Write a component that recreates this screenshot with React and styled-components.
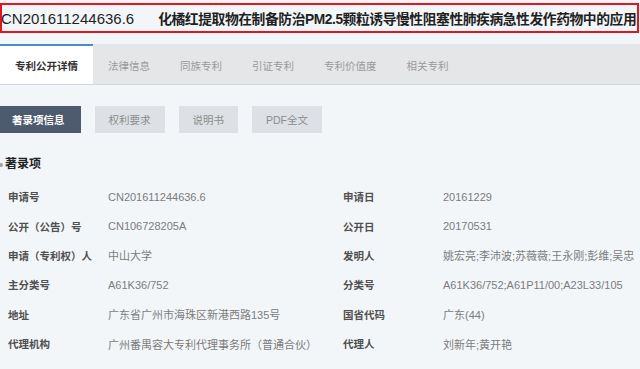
import React from "react";
import styled, { createGlobalStyle, css } from "styled-components";

const Global = createGlobalStyle`
  html, body { margin: 0; padding: 0; background: #f3f6f9; }
  body { font-family: "Liberation Sans", "Noto Sans CJK SC", sans-serif; overflow: hidden; }
`;

const Page = styled.div`
  width: 640px;
  height: 369px;
  padding-top: 3px;
  box-sizing: border-box;
`;

const TitleBox = styled.div`
  height: 30px;
  width: 639px;
  box-sizing: border-box;
  border: 2px solid #e3151d;
  display: flex;
  align-items: center;
  overflow: hidden;
  white-space: nowrap;
  color: #1f1f1f;
`;

const PatentNo = styled.span`
  font-size: 15px;
  margin-left: -1px;
`;

const PatentTitle = styled.span`
  font-size: 13.8px;
  font-weight: bold;
  margin-left: 24px;
  letter-spacing: -0.45px;
`;

const TabBar = styled.div`
  margin-top: 11px;
  height: 40px;
  background: #e4e6e7;
  border-bottom: 1px solid #cfd8e2;
  display: flex;
`;

const Tab = styled.div`
  padding: 0 15px;
  display: flex;
  align-items: center;
  font-size: 10.5px;
  color: #9a9a9a;
  box-sizing: border-box;
  border-top: 2px solid transparent;
  ${(p) =>
    p.$active &&
    css`
      background: #ffffff;
      color: #333;
      font-weight: bold;
      border-top-color: #4a8cc4;
    `}
`;

const ButtonRow = styled.div`
  margin-top: 21px;
  display: flex;
  gap: 14px;
`;

const Btn = styled.div`
  height: 27px;
  padding: 0 14px;
  display: flex;
  align-items: center;
  font-size: 10.5px;
  color: ${(p) => (p.$active ? "#ffffff" : "#8c8c8c")};
  background: ${(p) => (p.$active ? "#4e5a6d" : "#dde1e5")};
  font-weight: ${(p) => (p.$active ? "bold" : "normal")};
  &:first-child { padding-left: 12px; padding-right: 16px; }
`;

const Heading = styled.div`
  margin-top: 24px;
  padding-left: 5px;
  position: relative;
  font-size: 12px;
  line-height: 14px;
  font-weight: bold;
  color: #222;
  &::before {
    content: "";
    position: absolute;
    left: -1px;
    top: 6px;
    width: 4px;
    height: 4px;
    border-radius: 50%;
    background: #9aa3ad;
  }
`;

const Grid = styled.div`
  margin-top: 11px;
  padding-left: 8px;
  display: grid;
  grid-template-columns: 100px 235px 100px 1fr;
  grid-auto-rows: 29.4px;
  align-items: center;
  white-space: nowrap;
`;

const Label = styled.div`
  font-size: 10.5px;
  font-weight: bold;
  color: #505050;
`;

const Value = styled.div`
  font-size: 11px;
  color: #7c7c7c;
`;

const tabs = ["专利公开详情", "法律信息", "同族专利", "引证专利", "专利价值度", "相关专利"];
const buttons = ["著录项信息", "权利要求", "说明书", "PDF全文"];
const rows = [
  ["申请号", "CN201611244636.6", "申请日", "20161229"],
  ["公开（公告）号", "CN106728205A", "公开日", "20170531"],
  ["申请（专利权）人", "中山大学", "发明人", "姚宏亮;李沛波;苏薇薇;王永刚;彭维;吴忠"],
  ["主分类号", "A61K36/752", "分类号", "A61K36/752;A61P11/00;A23L33/105"],
  ["地址", "广东省广州市海珠区新港西路135号", "国省代码", "广东(44)"],
  ["代理机构", "广州番禺容大专利代理事务所（普通合伙）", "代理人", "刘新年;黄开艳"],
];

export default function App() {
  return (
    <Page>
      <Global />
      <TitleBox>
        <PatentNo>CN201611244636.6</PatentNo>
        <PatentTitle>化橘红提取物在制备防治PM2.5颗粒诱导慢性阻塞性肺疾病急性发作药物中的应用</PatentTitle>
      </TitleBox>
      <TabBar>
        {tabs.map((t, i) => (
          <Tab key={t} $active={i === 0}>{t}</Tab>
        ))}
      </TabBar>
      <ButtonRow>
        {buttons.map((b, i) => (
          <Btn key={b} $active={i === 0}>{b}</Btn>
        ))}
      </ButtonRow>
      <Heading>著录项</Heading>
      <Grid>
        {rows.map((r) => (
          <React.Fragment key={r[0]}>
            <Label>{r[0]}</Label>
            <Value>{r[1]}</Value>
            <Label>{r[2]}</Label>
            <Value>{r[3]}</Value>
          </React.Fragment>
        ))}
      </Grid>
    </Page>
  );
}
